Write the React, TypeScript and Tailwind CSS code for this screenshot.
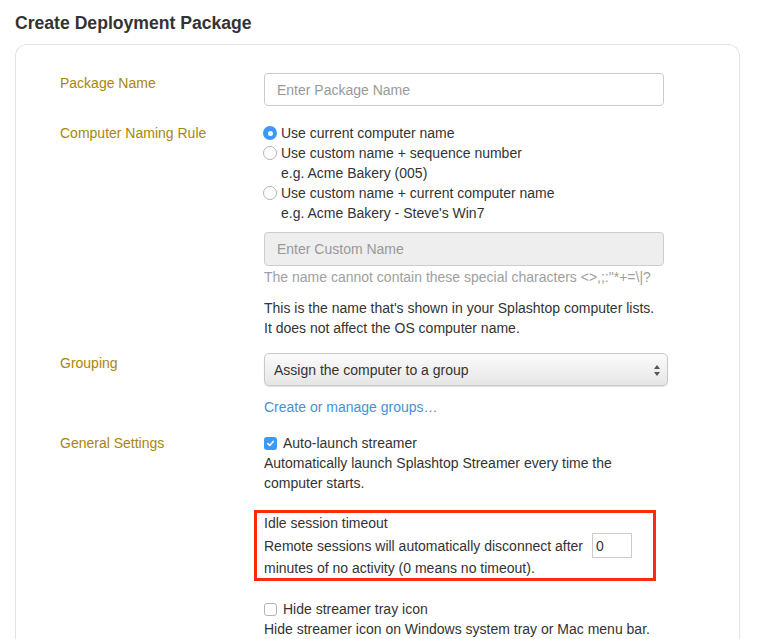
import type { ReactNode } from "react";

const FONT = "font-['Liberation_Sans',Arial,sans-serif]";

function Label({ children }: { children: ReactNode }) {
  return <div className="text-[14px] leading-[20px] text-[#a8860b]">{children}</div>;
}

function Radio({ checked }: { checked?: boolean }) {
  if (checked) {
    return (
      <span className="ml-[-1px] flex h-[14px] w-[14px] shrink-0 items-center justify-center rounded-full bg-[#3b99fc]">
        <span className="h-[5px] w-[5px] rounded-full bg-white" />
      </span>
    );
  }
  return <span className="ml-[-1px] h-[14px] w-[14px] shrink-0 rounded-full border border-[#b4b4b4] bg-white" />;
}

function Checkbox({ checked }: { checked?: boolean }) {
  if (checked) {
    return (
      <span className="flex h-[13px] w-[13px] shrink-0 items-center justify-center rounded-[3px] bg-[#3b99fc]">
        <svg width="9" height="9" viewBox="0 0 9 9" fill="none">
          <path d="M1.8 4.7 L3.7 6.5 L7.2 2.4" stroke="white" strokeWidth="1.6" strokeLinecap="round" strokeLinejoin="round" />
        </svg>
      </span>
    );
  }
  return <span className="h-[13px] w-[13px] shrink-0 rounded-[3px] border border-[#b4b4b4] bg-white" />;
}

export default function App() {
  return (
    <div className={`${FONT} min-h-[639px] bg-white text-[14px] text-[#333]`}>
      <h1 className="pl-[15px] pt-[13px] text-[17.6px] font-bold leading-[20px] text-[#333]">Create Deployment Package</h1>

      <div className="ml-[15px] mt-[11px] w-[725px] rounded-t-[12px] border border-b-0 border-[#e3e3e3] pb-10 pl-[44px] pt-[28px]">
        <div className="grid grid-cols-[204px_1fr]">
          <Label>Package Name</Label>
          <div>
            <input
              placeholder="Enter Package Name"
              className="h-[33px] w-[400px] rounded-[4px] border border-[#ccc] px-[12px] text-[14px] outline-none placeholder:text-[#999]"
            />
          </div>

          <div className="mt-[17px]">
            <Label>Computer Naming Rule</Label>
          </div>
          <div className="mt-[17px] leading-[20px]">
            <div className="flex h-[20px] items-center gap-[4px]">
              <Radio checked />
              <span>Use current computer name</span>
            </div>
            <div className="flex h-[20px] items-center gap-[4px]">
              <Radio />
              <span>Use custom name + sequence number</span>
            </div>
            <div className="pl-[17px]">e.g. Acme Bakery (005)</div>
            <div className="flex h-[20px] items-center gap-[4px]">
              <Radio />
              <span>Use custom name + current computer name</span>
            </div>
            <div className="pl-[17px]">e.g. Acme Bakery - Steve's Win7</div>

            <input
              disabled
              placeholder="Enter Custom Name"
              className="mt-[9px] h-[34px] w-[400px] rounded-[4px] border border-[#ccc] bg-[#eee] px-[12px] text-[14px] outline-none placeholder:text-[#999]"
            />
            <div className="mt-[1px] text-[#a0a0a0]">The name cannot contain these special characters &lt;&gt;,;:"*+=\|?</div>
            <div className="mt-[11px]">
              This is the name that's shown in your Splashtop computer lists.
              <br />
              It does not affect the OS computer name.
            </div>
          </div>

          <div className="mt-[15px]">
            <Label>Grouping</Label>
          </div>
          <div className="mt-[15px] leading-[20px]">
            <div className="relative flex h-[33px] w-[404px] items-center rounded-[5px] border border-[#c8c8c8] bg-gradient-to-b from-[#fbfbfb] to-[#e6e6e6] pl-[9px] shadow-[0_1px_1px_rgba(0,0,0,0.12)]">
              <span className="text-[#333]">Assign the computer to a group</span>
              <svg className="absolute right-[6px] top-[10px]" width="8" height="13" viewBox="0 0 8 13">
                <path d="M4 1 L7 5 L1 5 Z" fill="#555" />
                <path d="M4 12 L7 8 L1 8 Z" fill="#555" />
              </svg>
            </div>
            <a className="mt-[11px] block text-[#4a8fd6]">Create or manage groups…</a>
          </div>

          <div className="mt-[16px]">
            <Label>General Settings</Label>
          </div>
          <div className="mt-[16px] leading-[20px]">
            <div className="flex h-[20px] items-center gap-[6px]">
              <Checkbox checked />
              <span>Auto-launch streamer</span>
            </div>
            <div className="w-[400px]">Automatically launch Splashtop Streamer every time the computer starts.</div>

            <div className="ml-[-10px] mt-[17px] w-[402px] border-[3px] border-[#ff2a0a] pl-[7px]">
              <div>Idle session timeout</div>
              <div className="flex h-[25px] items-center">
                <span>Remote sessions will automatically disconnect after</span>
                <input
                  defaultValue="0"
                  className="ml-[9px] h-[25px] w-[40px] border border-[#ccc] px-[3px] text-[14px] outline-none"
                />
              </div>
              <div>minutes of no activity (0 means no timeout).</div>
            </div>

            <div className="mt-[18px] flex h-[20px] items-center gap-[6px]">
              <Checkbox />
              <span>Hide streamer tray icon</span>
            </div>
            <div>Hide streamer icon on Windows system tray or Mac menu bar.</div>
          </div>
        </div>
      </div>
    </div>
  );
}
